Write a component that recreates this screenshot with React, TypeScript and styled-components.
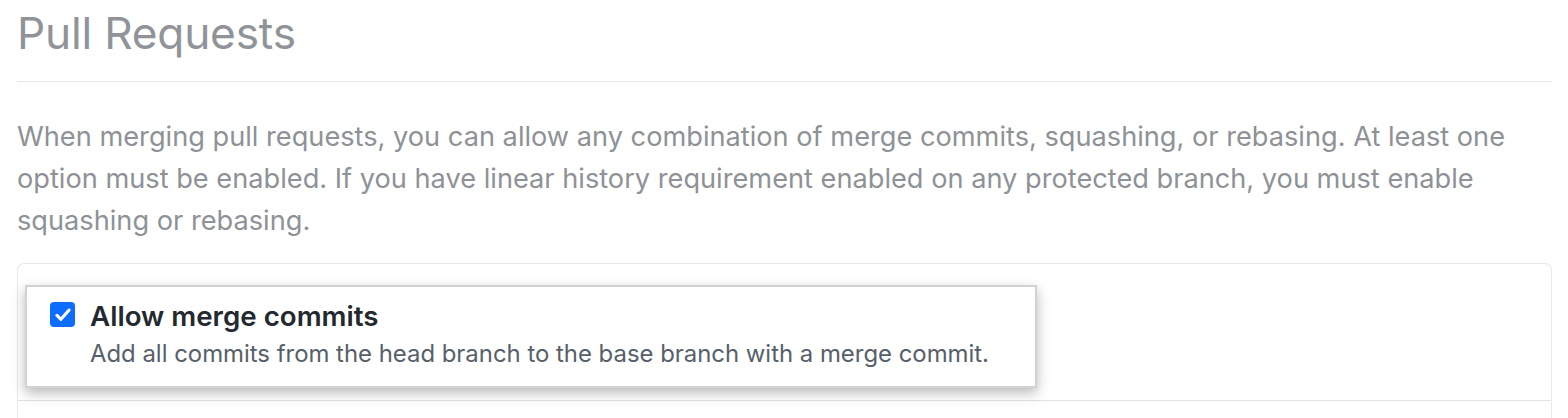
import React from "react";
import styled, { createGlobalStyle } from "styled-components";

const Global = createGlobalStyle`
  html, body { margin: 0; padding: 0; background: #ffffff; }
  body { font-family: Inter, "Noto Sans", "Liberation Sans", sans-serif; }
`;

const Page = styled.div`
  padding: 0 16px 0 17px;
  width: 1535px;
  box-sizing: content-box;
`;

const Header = styled.div`
  border-bottom: 1.5px solid #e6e8eb;
  height: 82px;
  box-sizing: border-box;
  display: flex;
  align-items: flex-start;
`;

const Title = styled.h2`
  margin: 0;
  padding-top: 5px;
  font-size: 44.2px;
  line-height: 56px;
  font-weight: 400;
  color: #909499;
  letter-spacing: -0.2px;
`;

const Intro = styled.p`
  margin: 34px 0 0 0;
  font-size: 27.2px;
  line-height: 42px;
  color: #8e9297;
  max-width: 1500px;
`;

const Box = styled.div`
  margin-top: 21px;
  border: 1.5px solid #e6e8eb;
  border-bottom: none;
  border-radius: 7px 7px 0 0;
  height: 160px;
  box-sizing: border-box;
`;

const Row = styled.div`
  padding: 21px 0 12px 7px;
  border-bottom: 1.5px solid #dfe2e6;
`;

const Card = styled.div`
  width: 1012px;
  height: 103px;
  box-sizing: border-box;
  background: #ffffff;
  border: 2px solid #d2d2d2;
  box-shadow: 0 5px 12px rgba(0, 0, 0, 0.28);
  padding: 13px 0 0 23px;
  display: flex;
  gap: 15px;
  align-items: flex-start;
`;

const Check = styled.span`
  flex: none;
  width: 25px;
  height: 25px;
  margin-top: 2px;
  border-radius: 4px;
  background: #0d6efd;
  display: flex;
  align-items: center;
  justify-content: center;
`;

const TextCol = styled.div`
  display: flex;
  flex-direction: column;
`;

const Label = styled.div`
  font-size: 27.7px;
  line-height: 32px;
  font-weight: 600;
  color: #24292f;
`;

const Note = styled.div`
  margin-top: 8px;
  font-size: 23.9px;
  line-height: 28px;
  color: #57606a;
`;

export default function App() {
  return (
    <>
      <Global />
      <Page>
        <Header>
          <Title>Pull Requests</Title>
        </Header>
        <Intro>
          When merging pull requests, you can allow any combination of merge commits, squashing, or rebasing. At least one
          option must be enabled. If you have linear history requirement enabled on any protected branch, you must enable
          squashing or rebasing.
        </Intro>
        <Box>
          <Row>
            <Card>
              <Check>
                <svg width="18" height="18" viewBox="0 0 16 16">
                  <path d="M2.6 8.4 L6.2 11.8 L13.4 3.6" fill="none" stroke="#ffffff" strokeWidth="2.8" strokeLinecap="round" strokeLinejoin="round" />
                </svg>
              </Check>
              <TextCol>
                <Label>Allow merge commits</Label>
                <Note>Add all commits from the head branch to the base branch with a merge commit.</Note>
              </TextCol>
            </Card>
          </Row>
        </Box>
      </Page>
    </>
  );
}
